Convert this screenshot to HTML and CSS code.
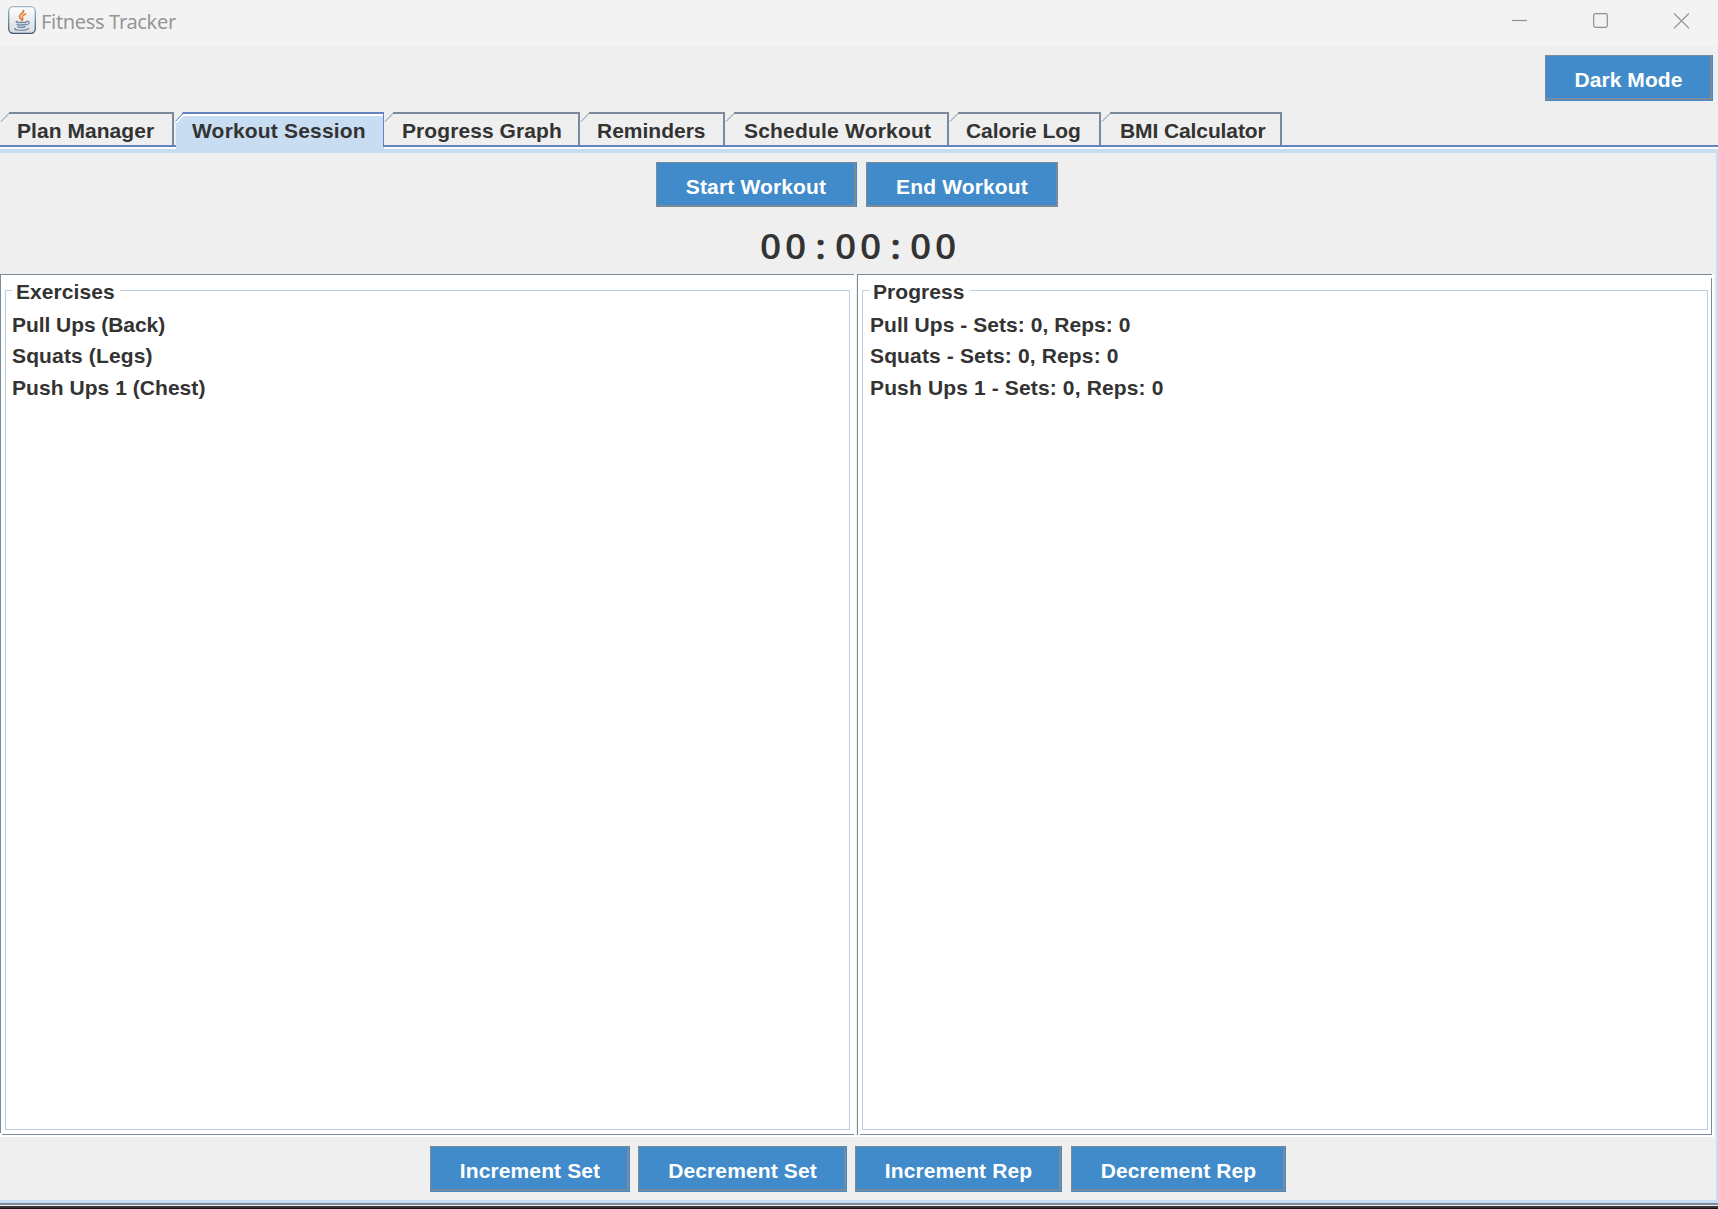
FILE: index.html
```html
<!DOCTYPE html>
<html lang="en">
<head>
<meta charset="utf-8">
<title>Fitness Tracker</title>
<link rel="stylesheet" href="styles.css">
</head>
<body>
<div class="window">
  <header class="titlebar">
    <svg class="app-icon" width="28" height="28" viewBox="0 0 28 28">
      <defs>
        <linearGradient id="face" x1="0" y1="0" x2="0" y2="1"><stop offset="0" stop-color="#fdfdfd"/><stop offset="1" stop-color="#d9dcdf"/></linearGradient>
        <linearGradient id="rim" x1="0" y1="0" x2="0" y2="1"><stop offset="0" stop-color="#9fb9ca"/><stop offset="1" stop-color="#3f5870"/></linearGradient>
      </defs>
      <rect x=".7" y=".7" width="26.600" height="26.600" rx="4.500" fill="url(#face)" stroke="url(#rim)" stroke-width="1.300"/>
      <g fill="none" stroke-linecap="round">
        <path d="M15.500 4.500c1 2.500-4.500 3.500-4 6 .2 1.500 2 2.500 2.500 4" stroke="#e9792b" stroke-width="1.700"/>
        <path d="M17.800 8c-2.500 1-4 2-3.300 3.500.5 1 .9 1.500-.2 2.800" stroke="#e9792b" stroke-width="1.400"/>
        <path d="M8.500 15.300c-1.500 1 2.500 1.400 5.500 1.300 2 0 3.500-.2 5-.7M9 18.200c1 .9 6.500 1 9 0M9.800 20.700c1.500.9 5 .9 7.200.1" stroke="#6f8ba5" stroke-width="1.500"/>
        <path d="M19 15.200c3-.6 3.200 2.800-.3 3.800" stroke="#6f8ba5" stroke-width="1.200"/>
        <path d="M7.500 22.500c-4 1.500 7 2.300 11 1.200 1.500-.4 2.300-.8 2-1.300" stroke="#6f8ba5" stroke-width="1.200"/>
      </g>
    </svg>
    <span class="title">Fitness Tracker</span>
    <svg class="controls" width="177" height="16" viewBox="0 0 177 16" fill="none" stroke="#919191" stroke-width="1.200">
      <path d="M0 7.500h15"/>
      <rect x="81.700" y=".7" width="13.600" height="13.600" rx="1.500"/>
      <path d="M162 0.300l15 15M177 .3l-15 15"/>
    </svg>
  </header>

  <div class="toolbar"><button class="btn lipped dark-mode">Dark Mode</button></div>

  <nav class="tabs">
    <div class="tab plan"><svg class="notch" width="9" height="10"><path d="M1 9.500L9 1.500"/></svg>Plan Manager</div>
    <div class="tab session active"><svg class="notch" width="9" height="11"><path class="cut" d="M0 0H8L1 8V11H0Z"/><path class="gleam" d="M1 10.500L8.500 3"/><path d="M.5 9.500L8 1.500" /></svg>Workout Session</div>
    <div class="tab graph"><svg class="notch" width="9" height="10"><path d="M1 9.500L9 1.500"/></svg>Progress Graph</div>
    <div class="tab reminders"><svg class="notch" width="9" height="10"><path d="M1 9.500L9 1.500"/></svg>Reminders</div>
    <div class="tab schedule"><svg class="notch" width="9" height="10"><path d="M1 9.500L9 1.500"/></svg>Schedule Workout</div>
    <div class="tab calories"><svg class="notch" width="9" height="10"><path d="M1 9.500L9 1.500"/></svg>Calorie Log</div>
    <div class="tab bmi"><svg class="notch" width="9" height="10"><path d="M1 9.500L9 1.500"/></svg>BMI Calculator</div>
  </nav>

  <main class="content">
    <div class="session-actions">
      <button class="btn start">Start Workout</button>
      <button class="btn end">End Workout</button>
    </div>
    <div class="timer"><span>0</span><span>0</span><span class="colon">:</span><span>0</span><span>0</span><span class="colon">:</span><span>0</span><span>0</span></div>
    <div class="panels">
      <section class="panel exercises">
        <div class="group">
          <h2>Exercises</h2>
          <ul><li class="snug">Pull Ups (Back)</li><li class="wide">Squats (Legs)</li><li>Push Ups 1 (Chest)</li></ul>
        </div>
      </section>
      <section class="panel progress">
        <div class="group">
          <h2>Progress</h2>
          <ul><li>Pull Ups - Sets: 0, Reps: 0</li><li class="wide">Squats - Sets: 0, Reps: 0</li><li class="wide">Push Ups 1 - Sets: 0, Reps: 0</li></ul>
        </div>
      </section>
    </div>
    <div class="counter-actions">
      <button class="btn lipped inc-set">Increment Set</button>
      <button class="btn lipped dec-set">Decrement Set</button>
      <button class="btn lipped inc-rep">Increment Rep</button>
      <button class="btn lipped dec-rep">Decrement Rep</button>
    </div>
  </main>
  <footer class="frame-edge"></footer>
</div>
</body>
</html>
```
FILE: styles.css
```css
* { box-sizing: border-box; }

body {
  margin: 0;
  background: #efefef;
  color: #333;
  font: bold 21px/24px "Liberation Sans", Arial, sans-serif;
}

.window {
  width: 1718px;
  height: 1209px;
  display: flex;
  flex-direction: column;
  overflow: hidden;
}

.titlebar {
  height: 46px;
  background: #f3f3f3;
  display: flex;
  align-items: flex-start;
  padding: 6px 28px 0 8px;
}

.title {
  margin: 2px 0 0 5px;
  font: 400 20px/28px "Noto Sans", "Open Sans", sans-serif;
  letter-spacing: -0.33px;
  color: #969696;
}

.controls { margin: 7px 1px 0 auto; }

.toolbar {
  height: 66px;
  padding: 9px 5px 0 0;
  display: flex;
  justify-content: flex-end;
}

.btn {
  height: 45px;
  margin: 0;
  padding: 6px 0 0 1px;
  border: solid #7a8a99;
  border-width: 1px 2px 2px 1px;
  background: #418bca;
  color: #fff;
  font: inherit;
  letter-spacing: 0.15px;
  white-space: nowrap;
}

.lipped {
  margin: 0 1px 1px 0;
  box-shadow: 1px 1px 0 #418bca, 1px 0 0 #418bca, 0 1px 0 #418bca;
}

.dark-mode {
  width: 167px;
  letter-spacing: 0.05px;
}

.tabs {
  height: 41px;
  display: flex;
  background: linear-gradient(transparent 33px, #6382bf 33px 35px, #fff 35px 37px, #c8ddf2 37px);
}

.tab {
  position: relative;
  height: 33px;
  padding: 7px 0 0 17px;
  border-right: 2px solid #7a8a99;
  background: linear-gradient(#7a8a99, #7a8a99) 9px 0 / 100% 2px no-repeat;
  white-space: nowrap;
}

.notch {
  position: absolute;
  left: 0;
  top: 0;
  fill: none;
  stroke: #7a8a99;
}

.active {
  height: 41px;
  border-right: 0;
  background:
    linear-gradient(#6382bf, #6382bf) 7px 0 / 100% 2px no-repeat,
    linear-gradient(#6382bf, #6382bf) 100% 0 / 1px 35px no-repeat,
    linear-gradient(#fff, #fff) 7px 2px / 100% 2px no-repeat,
    linear-gradient(#c8ddf2, #c8ddf2) 1px 0 no-repeat;
}

.active .notch { stroke: #6382bf; }
.active .cut { fill: #efefef; stroke: none; }
.active .gleam { stroke: #fff; stroke-width: 2; }

.plan { width: 174px; letter-spacing: 0.05px; }
.session { width: 209px; margin-left: 1px; letter-spacing: 0.18px; }
.graph { width: 196px; padding-left: 18px; letter-spacing: 0.08px; }
.reminders { width: 145px; }
.schedule { width: 224px; padding-left: 19px; letter-spacing: 0.2px; }
.calories { width: 152px; letter-spacing: -0.07px; }
.bmi { width: 181px; padding-left: 19px; letter-spacing: -0.1px; }

.content {
  height: 1050px;
  border: solid #c8ddf2;
  border-width: 0 2px 3px 0;
}

.session-actions {
  height: 63px;
  padding: 9px 2px 0 0;
  display: flex;
  justify-content: center;
  gap: 9px;
}

.start { width: 200px; box-shadow: 1px 0 0 #418bca; margin-right: 1px; }
.end { width: 192px; }

.timer {
  height: 58px;
  padding: 5px 0 0 0;
  display: flex;
  justify-content: center;
  font: 600 35px/50px "Open Sans", sans-serif;
}

.timer span {
  width: 25px;
  text-align: center;
  transform: scaleX(1.06);
}

.timer .colon { -webkit-text-stroke: 0.6px #333; }

.panels {
  height: 863px;
  display: flex;
}

.panel { padding: 16px 4px 0 5px; }

.exercises {
  width: 856px;
  border-right: 2px solid #fff;
  background:
    linear-gradient(#7a8a99, #7a8a99) 0 0 / 100% 1px no-repeat,
    linear-gradient(#7a8a99, #7a8a99) 2px 860px / 100% 1px no-repeat,
    linear-gradient(#7a8a99, #7a8a99) 0 0 / 1px 859px no-repeat,
    #fff;
}

.progress {
  width: 857px;
  margin-left: 1px;
  background:
    linear-gradient(#7a8a99, #7a8a99) 0 0 / 855px 1px no-repeat,
    linear-gradient(#7a8a99, #7a8a99) 3px 860px / 852px 1px no-repeat,
    linear-gradient(#7a8a99, #7a8a99) 0 0 / 1px 861px no-repeat,
    linear-gradient(#7a8a99, #7a8a99) 854px 4px / 1px 857px no-repeat,
    #fff;
  padding-right: 6px;
}

.group {
  height: 840px;
  border: 1px solid #b8cfe5;
  padding: 0 0 0 6px;
}

.group h2 {
  width: fit-content;
  margin: -11px 0 5px 0;
  padding: 0 5px 0 4px;
  background: #fff;
  font: inherit;
  letter-spacing: 0.06px;
}

.group ul {
  margin: 0;
  padding: 0;
  list-style: none;
}

.progress ul { padding-left: 1px; }

.group li {
  height: 31px;
  line-height: 32px;
  letter-spacing: 0.05px;
}

.group li:nth-child(2) { height: 32px; }

.group .snug { letter-spacing: -0.06px; }
.group .wide { letter-spacing: 0.14px; }

.counter-actions {
  height: 63px;
  padding: 9px 0 0 430px;
  display: flex;
}

.counter-actions .btn {
  margin-right: 9px;
  padding-left: 2px;
  letter-spacing: 0.12px;
}

.inc-set { width: 199px; }
.dec-set { width: 208px; }
.inc-rep { width: 206px; }
.counter-actions .inc-rep { margin-right: 10px; }
.dec-rep { width: 214px; }

.frame-edge {
  height: 6px;
  background: linear-gradient(#7a8a99 2px, #eee 2px 3px, #343234 3px 5px, #17131a 5px);
}
```
